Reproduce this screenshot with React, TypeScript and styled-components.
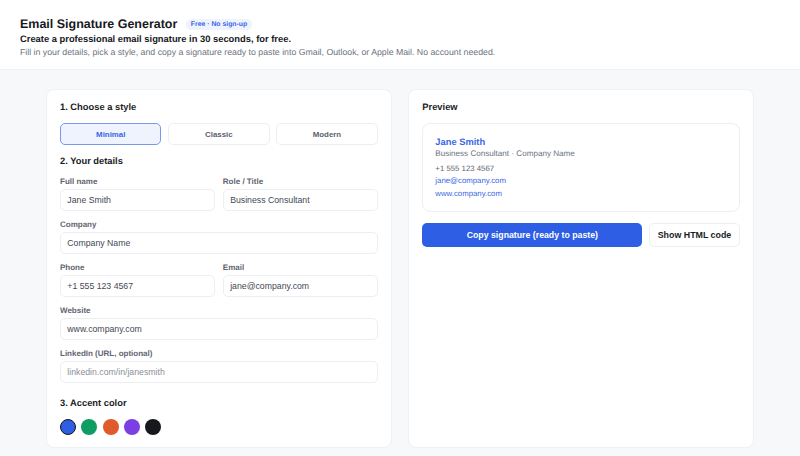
import React from "react";
import styled, { createGlobalStyle } from "styled-components";

const GlobalStyle = createGlobalStyle`
  html, body {
    margin: 0;
    height: 456px;
    overflow: hidden;
    background: #f6f8fa;
    font-family: "Liberation Sans", Arial, sans-serif;
    text-rendering: geometricPrecision;
  }
  * { box-sizing: border-box; }
`;

const Header = styled.header`
  height: 69.5px;
  padding: 16px 20px 0;
  background: #ffffff;
  border-bottom: 1px solid #eef0f3;
`;

const TitleRow = styled.div`
  display: flex;
  align-items: center;
  gap: 9px;
  height: 16px;
`;

const Title = styled.h1`
  margin: 0;
  font-size: 12.47px;
  font-weight: 600;
  color: #16181d;
`;

const Badge = styled.span`
  padding: 2px 4.5px;
  border-radius: 999px;
  background: #eff3fe;
  color: #3b66e6;
  font-size: 6.87px;
  font-weight: 700;
`;

const Tagline = styled.p`
  margin: 1px 0 0;
  font-size: 9.37px;
  line-height: 13px;
  font-weight: 700;
  color: #16181d;
`;

const Intro = styled.p`
  margin: 0;
  font-size: 8.76px;
  line-height: 12.5px;
  color: #6b7280;
`;

const Main = styled.main`
  display: grid;
  grid-template-columns: 346.33px 346.33px;
  gap: 16px;
  justify-content: center;
  padding-top: 19.17px;
`;

const Card = styled.section`
  height: 359px;
  padding: 11.5px 13.33px;
  background: #ffffff;
  border: 1px solid #eff1f4;
  border-radius: 8px;
`;

const SectionTitle = styled.h2<{ $top?: number }>`
  margin: ${(p) => p.$top ?? 0}px 0 0;
  font-size: 9.33px;
  line-height: 13px;
  font-weight: 700;
  color: #1a1d23;
`;

const StyleRow = styled.div`
  display: grid;
  grid-template-columns: repeat(3, 1fr);
  gap: 6.67px;
  margin-top: 9px;
`;

const StyleButton = styled.button<{ $active?: boolean }>`
  height: 22px;
  padding: 0;
  border: 1px solid ${(p) => (p.$active ? "#7a97ee" : "#eceef1")};
  border-radius: 5px;
  background: ${(p) => (p.$active ? "#eef3fe" : "#ffffff")};
  color: ${(p) => (p.$active ? "#3b66e6" : "#5b616c")};
  font: 700 7.87px "Liberation Sans", Arial, sans-serif;
`;

const FieldGrid = styled.div`
  display: grid;
  grid-template-columns: 1fr 1fr;
  column-gap: 8px;
  row-gap: 8px;
  margin-top: 8px;
`;

const Field = styled.label<{ $wide?: boolean }>`
  display: block;
  grid-column: ${(p) => (p.$wide ? "1 / -1" : "auto")};
`;

const FieldLabel = styled.span`
  display: block;
  margin-bottom: 2px;
  font-size: 8px;
  line-height: 11px;
  font-weight: 700;
  color: #5f6570;
`;

const Input = styled.input`
  display: block;
  width: 100%;
  height: 22px;
  padding: 0 6.33px;
  border: 1px solid #eceef1;
  border-radius: 5px;
  background: #ffffff;
  color: #444954;
  font: 8.72px "Liberation Sans", Arial, sans-serif;
  &::placeholder {
    color: #8b9099;
    opacity: 1;
  }
`;

const Swatches = styled.div`
  display: flex;
  gap: 5.33px;
  margin-top: 9px;
`;

const Swatch = styled.span<{ $color: string; $active?: boolean }>`
  width: 16px;
  height: 16px;
  border-radius: 50%;
  background: ${(p) => p.$color};
  border: ${(p) => (p.$active ? "1.33px solid #14161a" : "none")};
`;

const AccentTitle = styled(SectionTitle)`
  margin-top: 14px;
`;

const PreviewBox = styled.div`
  height: 89px;
  margin-top: 9px;
  padding: 11.5px 12px;
  border: 1px solid #eceef1;
  border-radius: 8px;
`;

const SigName = styled.div`
  font-size: 9.33px;
  line-height: 13px;
  font-weight: 700;
  color: #3b66e6;
`;

const SigRole = styled.div`
  font-size: 8.1px;
  line-height: 9.5px;
  color: #6b7280;
`;

const SigLine = styled.div<{ $first?: boolean; $link?: boolean }>`
  margin-top: ${(p) => (p.$first ? 5.5 : 2)}px;
  font-size: 7.8px;
  line-height: 10.5px;
  color: ${(p) => (p.$link ? "#3b66e6" : "#5f6570")};
`;

const Actions = styled.div`
  display: flex;
  gap: 6.67px;
  margin-top: 10.67px;
`;

const CopyButton = styled.button`
  flex: 1;
  height: 24.67px;
  border: none;
  border-radius: 5px;
  background: #2d5ee3;
  color: #ffffff;
  font: 700 8.75px "Liberation Sans", Arial, sans-serif;
`;

const HtmlButton = styled.button`
  width: 91px;
  height: 24.67px;
  padding: 0;
  border: 1px solid #eceef1;
  border-radius: 5px;
  background: #ffffff;
  color: #1a1d23;
  font: 700 8.85px "Liberation Sans", Arial, sans-serif;
`;

const colors = ["#2d5ee3", "#0f9d63", "#e05a2b", "#7c3fe4", "#16181d"];

export default function App() {
  return (
    <>
      <GlobalStyle />
      <Header>
        <TitleRow>
          <Title>Email Signature Generator</Title>
          <Badge>Free · No sign-up</Badge>
        </TitleRow>
        <Tagline>Create a professional email signature in 30 seconds, for free.</Tagline>
        <Intro>
          Fill in your details, pick a style, and copy a signature ready to paste into Gmail,
          Outlook, or Apple Mail. No account needed.
        </Intro>
      </Header>
      <Main>
        <Card>
          <SectionTitle>1. Choose a style</SectionTitle>
          <StyleRow>
            <StyleButton $active>Minimal</StyleButton>
            <StyleButton>Classic</StyleButton>
            <StyleButton>Modern</StyleButton>
          </StyleRow>
          <SectionTitle $top={10}>2. Your details</SectionTitle>
          <FieldGrid>
            <Field>
              <FieldLabel>Full name</FieldLabel>
              <Input defaultValue="Jane Smith" />
            </Field>
            <Field>
              <FieldLabel>Role / Title</FieldLabel>
              <Input defaultValue="Business Consultant" />
            </Field>
            <Field $wide>
              <FieldLabel>Company</FieldLabel>
              <Input defaultValue="Company Name" />
            </Field>
            <Field>
              <FieldLabel>Phone</FieldLabel>
              <Input defaultValue="+1 555 123 4567" />
            </Field>
            <Field>
              <FieldLabel>Email</FieldLabel>
              <Input defaultValue="jane@company.com" />
            </Field>
            <Field $wide>
              <FieldLabel>Website</FieldLabel>
              <Input defaultValue="www.company.com" />
            </Field>
            <Field $wide>
              <FieldLabel>LinkedIn (URL, optional)</FieldLabel>
              <Input placeholder="linkedin.com/in/janesmith" />
            </Field>
          </FieldGrid>
          <AccentTitle>3. Accent color</AccentTitle>
          <Swatches>
            {colors.map((c, i) => (
              <Swatch key={c} $color={c} $active={i === 0} />
            ))}
          </Swatches>
        </Card>
        <Card>
          <SectionTitle>Preview</SectionTitle>
          <PreviewBox>
            <SigName>Jane Smith</SigName>
            <SigRole>Business Consultant · Company Name</SigRole>
            <SigLine $first>+1 555 123 4567</SigLine>
            <SigLine $link>jane@company.com</SigLine>
            <SigLine $link>www.company.com</SigLine>
          </PreviewBox>
          <Actions>
            <CopyButton>Copy signature (ready to paste)</CopyButton>
            <HtmlButton>Show HTML code</HtmlButton>
          </Actions>
        </Card>
      </Main>
    </>
  );
}
